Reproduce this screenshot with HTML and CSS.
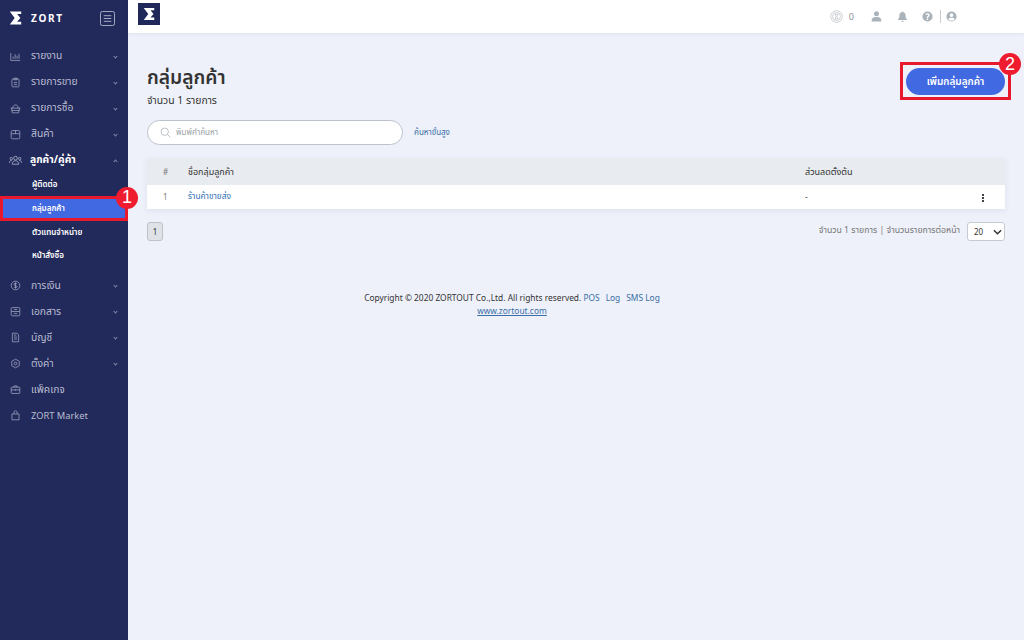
FILE: index.html
```html
<!DOCTYPE html>
<html lang="th">
<head>
<meta charset="utf-8">
<title>กลุ่มลูกค้า</title>
<link rel="stylesheet" href="styles.css">
</head>
<body>
<div class="app">
  <aside class="sidebar">
    <div class="brand">
      <svg class="brand-mark" viewBox="0 0 16 18" width="13" height="16"><path d="M1 1h14v3h-5l4 5-4 4.500h5V17H1l6-8z" fill="#fff"/></svg>
      <span class="brand-name">ZORT</span>
      <svg class="brand-toggle" viewBox="0 0 16 16" width="15" height="15"><rect x=".5" y=".5" width="15" height="15" rx="2" fill="none" stroke="#aeb3c9"/><path d="M4 5h8M4 8h8M4 11h8" stroke="#aeb3c9"/></svg>
    </div>
    <nav class="menu">
      <a class="item"><svg class="ic" viewBox="0 0 14 14"><path d="M1 2.500v9.500h12M4 10V7M6.500 10V4M9 10V6M11.500 10V3.500"/></svg><span class="label">รายงาน</span><i class="chev"></i></a>
      <a class="item"><svg class="ic" viewBox="0 0 14 14"><rect x="2.500" y="2.500" width="9" height="10" rx="1"/><path d="M5 1.500h4v2H5zM5 7h4M5 9.500h4"/></svg><span class="label">รายการขาย</span><i class="chev"></i></a>
      <a class="item"><svg class="ic" viewBox="0 0 14 14"><path d="M.8 6.500h12.400M2 6.500l1 6h8l1-6M3.500 6.500C4 3 5.500 2.500 7 2.500s3 .5 3.500 4M2 9.500h10"/></svg><span class="label">รายการซื้อ</span><i class="chev"></i></a>
      <a class="item"><svg class="ic" viewBox="0 0 14 14"><rect x="1.500" y="2" width="11" height="10.500" rx="1.500"/><path d="M1.500 6h11M7 2v4"/></svg><span class="label">สินค้า</span><i class="chev"></i></a>
      <a class="item open"><svg class="ic ic-team" viewBox="0 0 14 14"><circle cx="7" cy="4.500" r="2"/><circle cx="2.500" cy="5" r="1.300"/><circle cx="11.500" cy="5" r="1.300"/><path d="M3.500 11c0-5 7-5 7 0zM.5 9.500c0-2 1-2.500 2.500-2.500M13.500 9.500c0-2-1-2.500-2.500-2.500"/></svg><span class="label">ลูกค้า/คู่ค้า</span><i class="chev up"></i></a>
      <div class="sub">
        <a class="sub-item">ผู้ติดต่อ</a>
        <a class="sub-item active">กลุ่มลูกค้า<span class="mark mark-one"></span><span class="badge badge-one">1</span></a>
        <a class="sub-item">ตัวแทนจำหน่าย</a>
        <a class="sub-item">หน้าสั่งซื้อ</a>
      </div>
      <a class="item"><svg class="ic" viewBox="0 0 14 14"><circle cx="7" cy="7" r="5.500"/><path d="M9 5c-1-1-4-1-4 .7S9 7 9 8.500 6 10 5 9M7 3v8"/></svg><span class="label">การเงิน</span><i class="chev"></i></a>
      <a class="item"><svg class="ic" viewBox="0 0 14 14"><rect x="1.500" y="2" width="11" height="10.500" rx="1.500"/><path d="M1.500 7h11M5 4.500h4M5 9.500h4"/></svg><span class="label">เอกสาร</span><i class="chev"></i></a>
      <a class="item"><svg class="ic" viewBox="0 0 14 14"><path d="M3 1.500h6l2 2v9H3zM5 4h3M5 6.500h4M5 9h4"/></svg><span class="label">บัญชี</span><i class="chev"></i></a>
      <a class="item"><svg class="ic" viewBox="0 0 14 14"><path d="M7 1.500l4.800 2.700v5.600L7 12.500 2.200 9.800V4.200z"/><circle cx="7" cy="7" r="1.800"/></svg><span class="label">ตั้งค่า</span><i class="chev"></i></a>
      <a class="item"><svg class="ic" viewBox="0 0 14 14"><rect x="1.500" y="4" width="11" height="8" rx="1"/><path d="M5 4V2.500h4V4M1.500 7.500h11M7 7v1.500"/></svg><span class="label">แพ็คเกจ</span></a>
      <a class="item"><svg class="ic" viewBox="0 0 14 14"><path d="M2.500 5h9v7.500h-9zM5 5V3a2 2 0 0 1 4 0v2"/></svg><span class="label latin">ZORT Market</span></a>
    </nav>
  </aside>
  <div class="body">
    <header class="topbar">
      <div class="logo"><svg viewBox="0 0 16 18" width="12" height="14"><path d="M1 1h14v3h-5l4 5-4 4.500h5V17H1l6-8z" fill="#fff"/></svg></div>
      <div class="top-tools">
        <svg class="coin" viewBox="0 0 14 14" width="13" height="13"><circle cx="7" cy="7" r="6.300"/><circle cx="7" cy="7" r="4.300"/><path d="M5.500 4.500h3l-1 2.500 1 2.500h-3l1-2.500z"/></svg>
        <span class="count">0</span>
        <svg class="tool tool-user" viewBox="0 0 14 14" width="11" height="11"><circle cx="7" cy="3.500" r="3.200"/><path d="M.8 13.500c0-5 1.700-6 6.200-6s6.200 1 6.200 6z"/></svg>
        <svg class="tool tool-bell" viewBox="0 0 14 14" width="11" height="11"><path d="M7 .5a1 1 0 0 1 1 1.200c2.300.5 3 2.300 3 4.800 0 2 .5 3 1.800 4.300v.7H1.200v-.7C2.500 9.500 3 8.500 3 6.500c0-2.500.7-4.300 3-4.800A1 1 0 0 1 7 .5zM5.500 12.300h3a1.500 1.500 0 0 1-3 0z"/></svg>
        <svg class="tool tool-help" viewBox="0 0 14 14" width="11" height="11"><path fill-rule="evenodd" d="M7 .5a6.500 6.500 0 1 0 0 13 6.500 6.500 0 0 0 0-13zM6.100 9.200V8c0-1.300 1.900-1.500 1.900-2.700 0-1.300-2-1.200-2.600-.1L4.300 4.500C5.500 2.200 9.800 2.600 9.800 5.300c0 1.800-2 2-2 3.100v.8zM6.100 10h1.700v1.500H6.100z"/></svg>
        <span class="divider"></span>
        <svg class="tool tool-acct" viewBox="0 0 14 14" width="11" height="11"><path fill-rule="evenodd" d="M7 .5a6.500 6.500 0 1 0 0 13 6.500 6.500 0 0 0 0-13zM7 3a2.300 2.300 0 1 1 0 4.600A2.300 2.300 0 0 1 7 3zM3 10.500c.5-1.600 2-2 4-2s3.500.4 4 2a5 5 0 0 1-8 0z"/></svg>
      </div>
    </header>
    <main class="content">
      <div class="page-head">
        <div>
          <h1 class="title">กลุ่มลูกค้า</h1>
          <p class="subtitle">จำนวน 1 รายการ</p>
        </div>
        <div class="add-wrap">
          <button class="add-btn">เพิ่มกลุ่มลูกค้า</button>
          <span class="mark mark-two"></span>
          <span class="badge badge-two">2</span>
        </div>
      </div>
      <div class="search-row">
        <div class="search">
          <svg class="search-ic" viewBox="0 0 14 14" width="11" height="11"><circle cx="6" cy="6" r="4.700"/><path d="M9.500 9.500 13 13"/></svg>
          <span class="placeholder">พิมพ์คำค้นหา</span>
        </div>
        <a class="adv">ค้นหาขั้นสูง</a>
      </div>
      <div class="table">
        <div class="row head">
          <span class="c-num">#</span>
          <span class="c-name">ชื่อกลุ่มลูกค้า</span>
          <span class="c-disc">ส่วนลดตั้งต้น</span>
        </div>
        <div class="row data">
          <span class="c-num">1</span>
          <a class="c-name link">ร้านค้าขายส่ง</a>
          <span class="c-disc">-</span>
          <span class="kebab"><i></i><i></i><i></i></span>
        </div>
      </div>
      <div class="pager-row">
        <span class="page-btn">1</span>
        <div class="pager-info">
          <span>จำนวน 1 รายการ | จำนวนรายการต่อหน้า</span>
          <span class="select">20<svg viewBox="0 0 10 6" width="9" height="6"><path d="M1 1l4 4 4-4" fill="none" stroke="#333" stroke-width="1.600"/></svg></span>
        </div>
      </div>
      <footer class="footer">
        <div>Copyright © 2020 ZORTOUT Co.,Ltd. All rights reserved. <a class="flink">POS</a><a class="flink">Log</a><a class="flink">SMS Log</a></div>
        <a class="site">www.zortout.com</a>
      </footer>
    </main>
  </div>
</div>
</body>
</html>
```

FILE: styles.css
```css
* { box-sizing: border-box; }
html, body { margin: 0; height: 100%; }
body {
  font-family: "Noto Sans", "Noto Sans Thai", "Noto Sans Thai Looped", "Loma", "Liberation Sans", sans-serif;
  font-size: 9px;
  color: #333;
  background: #eef1fa;
  overflow: hidden;
}
.app { display: flex; width: 1024px; height: 640px; }
.sidebar { width: 128px; flex: none; background: #22295b; color: #b9bdd0; }
.brand { display: flex; align-items: center; height: 36px; padding: 0 13px 0 9px; }
.brand-mark { flex: none; }
.brand-name { margin-left: 9px; color: #fff; font-size: 10px; font-weight: 700; letter-spacing: 1.700px; }
.brand-toggle { margin-left: auto; }
.menu { padding-top: 7px; display: flex; flex-direction: column; }
.item { display: flex; align-items: center; height: 26px; padding: 0 10px; font-size: 10.300px; }
.ic { width: 11px; height: 11px; flex: none; fill: none; stroke: #9ea4bf; stroke-width: 1; }
.ic-team { width: 13px; height: 13px; margin: 0 -2px 0 -1px; }
.label { margin-left: 10px; }
.latin { font-size: 9.300px; }
.chev { margin-left: auto; width: 3px; height: 3px; margin-right: 1px; border: solid #858ba8; border-width: 0 1px 1px 0; transform: rotate(45deg); }
.chev.up { transform: rotate(-135deg); margin-top: 3px; }
.open { color: #fff; font-weight: 700; }
.sub { display: flex; flex-direction: column; padding-bottom: 5px; }
.sub-item { position: relative; display: flex; align-items: center; height: 23.700px; padding-left: 32px; color: #fff; font-size: 8px; font-weight: 600; }
.sub-item.active { background: #4169e1; }
.mark { position: absolute; border: 3px solid #e8192c; pointer-events: none; }
.mark-one { left: 0; right: 0; top: -1px; bottom: -1px; }
.badge { position: absolute; display: flex; align-items: center; justify-content: center; width: 22px; height: 22px; border-radius: 50%; background: #ee1c2e; color: #fff; font-size: 18px; font-weight: 500; font-family: "Liberation Sans", sans-serif; }
.badge-one { left: 116px; top: -10px; }

.body { flex: 1; display: flex; flex-direction: column; min-width: 0; }
.topbar { display: flex; align-items: center; height: 33px; padding: 0 67px 0 10px; background: #fff; box-shadow: 0 1px 3px rgba(60, 70, 110, .08); }
.logo { width: 22px; height: 22px; margin-top: -6px; background: #20285a; display: flex; align-items: center; justify-content: center; }
.top-tools { margin-left: auto; display: flex; align-items: center; }
.coin { fill: none; stroke: #b3b8bf; stroke-width: .7; }
.count { margin-left: 6px; color: #8b9199; font-size: 9px; }
.tool { fill: #aab2ba; }
.tool-user { margin-left: 17px; }
.tool-bell { margin-left: 15px; }
.tool-help { margin-left: 14px; }
.divider { width: 1px; height: 13px; margin: 0 5px 0 7px; background: #c8ccd2; }

.content { flex: 1; padding: 0 19px; }
.page-head { display: flex; justify-content: space-between; align-items: flex-start; padding-top: 31px; }
.title { margin: 0; font-size: 19.200px; line-height: 26px; font-weight: 600; color: #333; }
.subtitle { margin: 3px 0 0; font-size: 10.400px; line-height: 14px; color: #333; }
.add-wrap { position: relative; margin-top: 4px; margin-right: 0; }
.add-btn { display: block; width: 99px; height: 27px; border: 0; border-radius: 14px; background: #4169e1; color: #fff; font: 600 10px "Noto Sans", "Noto Sans Thai", sans-serif; }
.mark-two { left: -6px; right: -6px; top: -6px; bottom: -5px; }
.badge-two { right: -16px; top: -15px; }

.search-row { display: flex; align-items: center; margin-top: 13px; }
.search { display: flex; align-items: center; width: 256px; height: 25px; padding-left: 12px; border: 1px solid #bcc2cc; border-radius: 13px; background: #fff; }
.search-ic { fill: none; stroke: #aab0b8; stroke-width: 1; }
.placeholder { margin-left: 5px; font-size: 8px; color: #9a9fa6; }
.adv { margin-left: 11px; color: #3a6ea5; font-size: 8px; }

.table { margin-top: 13px; box-shadow: 0 2px 6px rgba(60, 70, 110, .08); border-radius: 2px; }
.row { display: flex; align-items: center; position: relative; }
.head { height: 27px; background: #e8ebef; font-size: 9px; }
.data { height: 24px; padding-bottom: 2px; background: #fff; font-size: 8.300px; }
.c-num { width: 41px; padding-left: 16px; color: #777; font-size: 8px; }
.c-name { width: 617px; }
.c-disc { flex: none; }
.link { color: #2f6fb5; }
.kebab { position: absolute; right: 21px; top: 9px; display: flex; flex-direction: column; gap: 1px; }
.kebab i { display: block; width: 2px; height: 2px; background: #444; }

.pager-row { display: flex; justify-content: space-between; align-items: center; margin-top: 13px; }
.page-btn { display: flex; align-items: center; justify-content: center; width: 16px; height: 19px; border: 1px solid #bcc2c8; border-radius: 3px; background: #dfe3e8; font-size: 8px; }
.pager-info { display: flex; align-items: center; gap: 7px; color: #777; font-size: 8.700px; }
.pager-info > span:first-child { margin-top: -3px; }
.select { display: flex; align-items: center; justify-content: space-between; width: 38px; height: 19px; padding: 0 2px 0 6px; border: 1px solid #c6cbd2; border-radius: 3px; background: #fff; color: #333; font-size: 8px; }

.footer { margin: 50px 128px 0 0; text-align: center; font-size: 8.400px; line-height: 13px; color: #333; }
.flink { margin-left: 6px; color: #3a6ea5; }
.flink:first-of-type { margin-left: 0; }
.site { color: #3a6ea5; text-decoration: underline; }
```
